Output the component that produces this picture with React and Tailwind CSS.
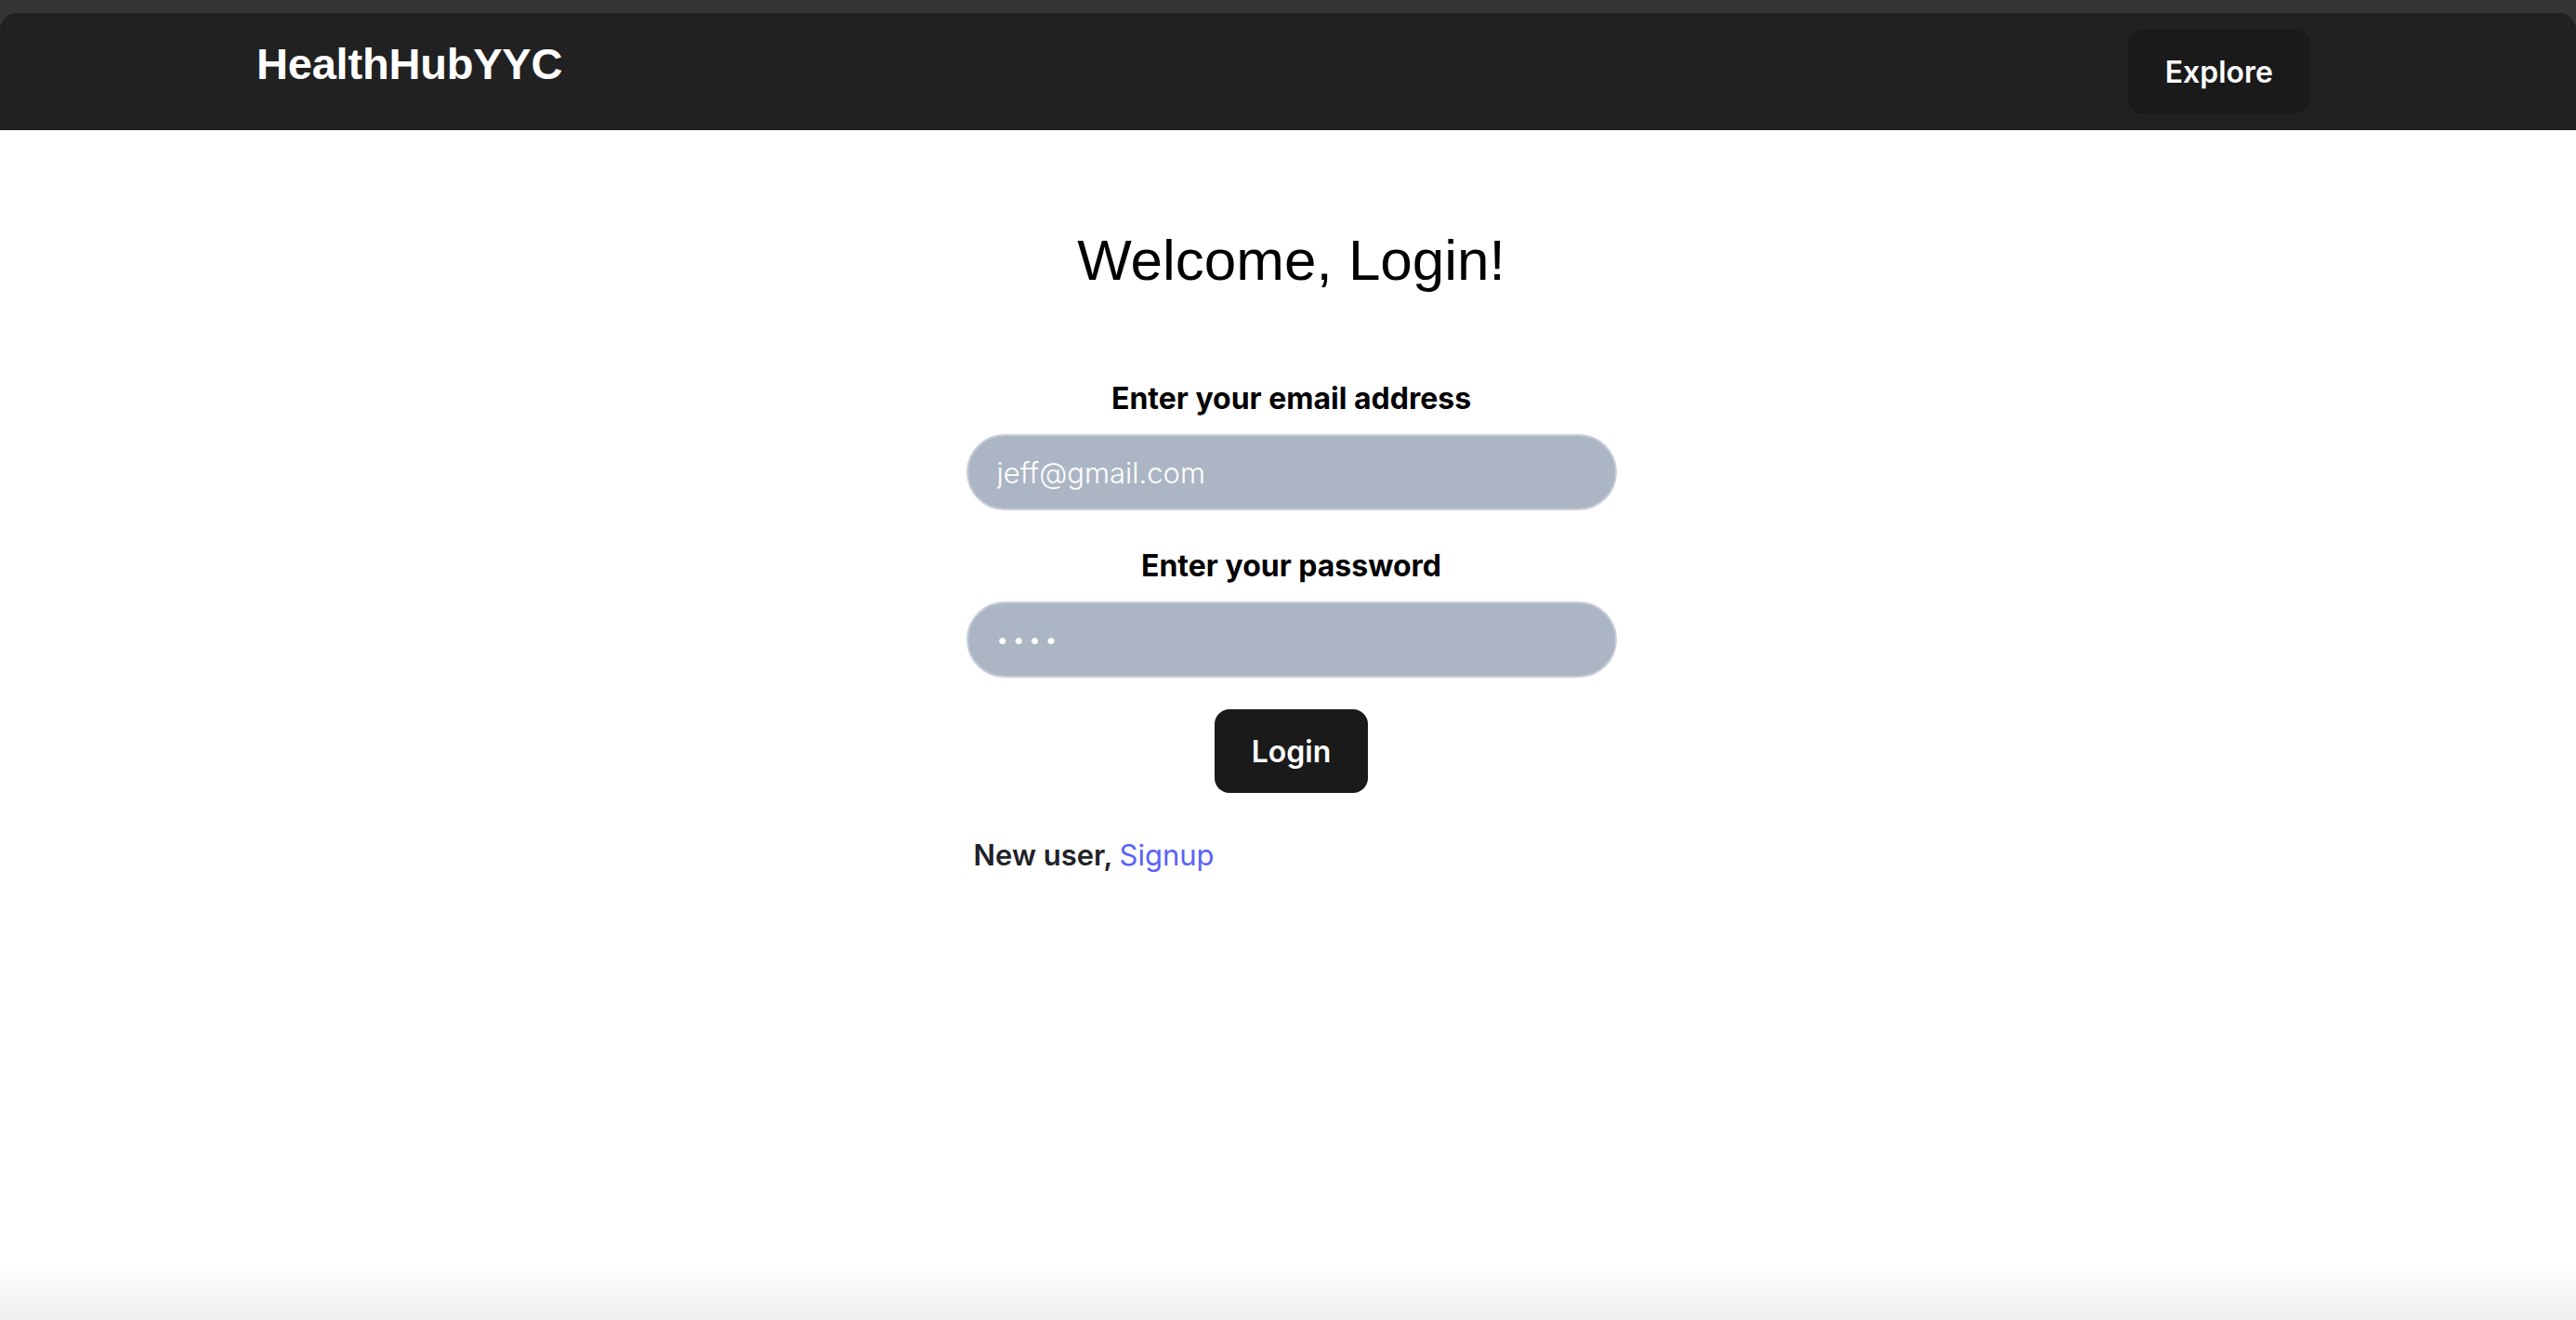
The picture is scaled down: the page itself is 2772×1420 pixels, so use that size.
import { useState } from 'react';

function NavBar() {
  return (
    <nav className="rounded-t-[18px] bg-[#212121] flex items-start justify-between pl-[276px] pr-[286px] py-[18px]">
      <a className="mt-[10px] text-[47px] leading-[54px] font-bold text-white font-['Liberation_Sans',Arial,sans-serif] tracking-[-0.2px]">
        HealthHubYYC
      </a>
      <button className="rounded-[16px] border-2 border-transparent bg-[#1a1a1a] px-[38px] pt-[20px] pb-[18px] text-[32px] leading-[48px] font-semibold text-white font-['Inter',sans-serif]">
        Explore
      </button>
    </nav>
  );
}

function Field({ label, type, placeholder, value, onChange, className, inputText }) {
  return (
    <>
      <label className={`text-[32px] leading-[48px] font-bold text-black ${className}`}>{label}</label>
      <input
        type={type}
        placeholder={placeholder}
        value={value}
        onChange={(e) => onChange(e.target.value)}
        className={`mt-[14px] w-full h-[82px] rounded-full border-2 border-[#c9cfd8] bg-[#acb5c4] px-[31px] text-white placeholder:text-white outline-none font-['Inter',sans-serif] ${inputText}`}
      />
    </>
  );
}

export default function App() {
  const [email, setEmail] = useState('');
  const [pw, setPw] = useState('1234');

  return (
    <div className="min-h-screen flex flex-col bg-[#353535] pt-[14px] font-['Inter',sans-serif]">
      <NavBar />

      <main className="flex-1 bg-white flex flex-col items-center pl-[7px]">
        <h1 className="mt-[104px] text-[62px] leading-[72px] font-normal text-black font-['Liberation_Sans',Arial,sans-serif]">
          Welcome, Login!
        </h1>

        <form className="w-[700px] flex flex-col items-center" onSubmit={(e) => e.preventDefault()}>
          <Field
            label="Enter your email address"
            type="email"
            placeholder="jeff@gmail.com"
            value={email}
            onChange={setEmail}
            className="mt-[89px]"
            inputText="text-[31px] font-light"
          />
          <Field
            label="Enter your password"
            type="password"
            value={pw}
            onChange={setPw}
            className="mt-[36px]"
            inputText="text-[22px] tracking-[5px]"
          />
          <button
            type="submit"
            className="mt-[34px] rounded-[16px] border-2 border-transparent bg-[#1a1a1a] px-[38px] pt-[20px] pb-[18px] text-[32px] leading-[48px] font-semibold text-white"
          >
            Login
          </button>
          <p className="self-start ml-[8px] mt-[45px] text-[31px] leading-[44px] text-[#1f232a]">
            <span className="font-semibold">New user, </span>
            <a className="text-[#5a63f6]">Signup</a>
          </p>
        </form>
      </main>

      <div className="h-[56px] bg-gradient-to-b from-white to-[#ededed]" />
    </div>
  );
}
